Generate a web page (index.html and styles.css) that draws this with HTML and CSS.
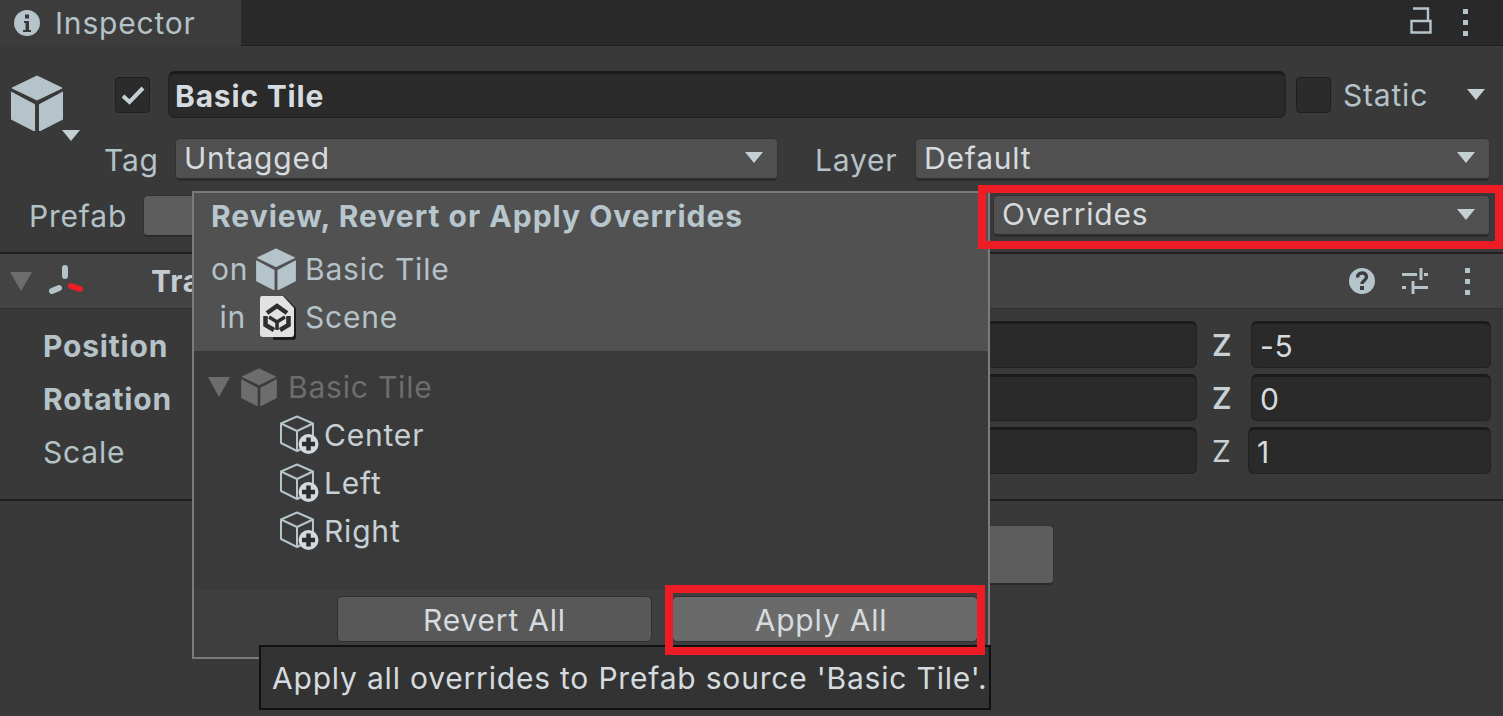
FILE: index.html
```html
<!DOCTYPE html>
<html lang="en">
<head>
    <meta charset="UTF-8">
    <title>Inspector</title>
    <link rel="stylesheet" href="styles.css">
</head>
<body>
    <svg class="defs" width="0" height="0">
        <symbol id="cube" viewBox="0 0 52 56">
            <path d="M26 1 L51 13 L26 25 L1 13Z M0 17 L23.5 29.5 V56 L0 44Z M28.5 29.5 L52 17 V44 L28.5 56Z" fill="currentColor" stroke="currentColor" stroke-width="1" stroke-linejoin="round"/>
        </symbol>
        <symbol id="cube-add" viewBox="0 0 40 40">
            <path d="M2 8.5 L18 1.5 L34 8.5 V28 L18 36 L2 28Z M2 8.5 L18 16 L34 8.5 M18 16 V36" fill="none" stroke="#b5c4cb" stroke-width="2" stroke-linejoin="round"/>
            <circle cx="29.5" cy="29" r="10" fill="#d3dade"/>
            <path d="M29.5 22.5 V35.5 M23 29 H36" stroke="#2c2c2c" stroke-width="4.5"/>
        </symbol>
    </svg>

    <div class="inspector">
        <div class="tabbar">
            <div class="tab">
                <svg class="tab-icon" width="28" height="28" viewBox="0 0 28 28">
                    <circle cx="14" cy="14" r="13" fill="#b5c4cb"/>
                    <path d="M11 12 H16 V21 H18 V23 H10 V21 H12.5 V14 H11Z" fill="#383838"/>
                    <rect x="12" y="5.5" width="4" height="4" fill="#383838"/>
                </svg>
                <span>Inspector</span>
            </div>
            <div class="tab-rest">
                <svg class="lock" width="22" height="27" viewBox="0 0 22 27">
                    <path d="M3 1.5 H18 V13.5 M1.5 14 H20.5 V25.5 H1.5Z" fill="none" stroke="#b5c4cb" stroke-width="2.4"/>
                </svg>
                <div class="kebab"><i></i><i></i><i></i></div>
            </div>
        </div>

        <div class="object-head">
            <div class="object-icon">
                <svg class="big-cube" width="52" height="56"><use href="#cube"/></svg>
                <span class="caret caret-small"></span>
            </div>
            <div class="name-row">
                <div class="check">
                    <svg width="24" height="20" viewBox="0 0 24 20"><path d="M2 11 L8.5 17 L22 3" fill="none" stroke="#c4ced3" stroke-width="4"/></svg>
                </div>
                <div class="name-field">Basic Tile</div>
                <div class="check check-static"></div>
                <span class="label static-label">Static</span>
                <span class="caret caret-static"></span>
            </div>
            <div class="tag-row">
                <span class="label tag-label">Tag</span>
                <div class="dropdown tag-drop">Untagged<span class="caret"></span></div>
                <span class="label layer-label">Layer</span>
                <div class="dropdown layer-drop">Default<span class="caret"></span></div>
            </div>
        </div>

        <div class="prefab-row">
            <span class="label prefab-label">Prefab</span>
            <div class="plain-btn prefab-btn"></div>
            <div class="dropdown override-drop">Overrides<span class="caret"></span></div>
        </div>

        <div class="comp-header">
            <span class="caret caret-fold"></span>
            <svg class="gizmo" width="38" height="36" viewBox="0 0 38 36">
                <path d="M18 5 V13 M5 28 L12 25" stroke="#b5c4cb" stroke-width="6" stroke-linecap="round"/>
                <path d="M24 23 L33 26" stroke="#ee1c25" stroke-width="6" stroke-linecap="round"/>
            </svg>
            <b class="comp-title">Tra</b>
            <div class="comp-tools">
                <svg width="28" height="28" viewBox="0 0 28 28">
                    <circle cx="14" cy="14" r="13" fill="#b5c4cb"/>
                    <path d="M9.5 10.5 C9.5 4.5 18.5 4.5 18.5 10 C18.5 13.5 14 13.5 14 17" fill="none" stroke="#3c3c3c" stroke-width="3.4"/>
                    <rect x="12" y="19" width="4" height="4" fill="#3c3c3c"/>
                </svg>
                <svg class="sliders" width="28" height="28" viewBox="0 0 28 28">
                    <path d="M1 7.5 H16 M23 7.5 H27 M20 1 V13 M1 20.5 H5 M12 20.5 H27 M12 14 V27" fill="none" stroke="#b5c4cb" stroke-width="3"/>
                </svg>
                <div class="kebab"><i></i><i></i><i></i></div>
            </div>
        </div>

        <div class="vectors">
            <div class="vec-row">
                <b class="vec-label">Position</b>
                <div class="field"></div>
                <span class="axis axis-changed">Z</span>
                <div class="field field-z">-5</div>
            </div>
            <div class="vec-row">
                <b class="vec-label">Rotation</b>
                <div class="field"></div>
                <span class="axis axis-changed">Z</span>
                <div class="field field-z">0</div>
            </div>
            <div class="vec-row">
                <span class="vec-label">Scale</span>
                <div class="field"></div>
                <span class="axis axis-scale">Z</span>
                <div class="field field-z">1</div>
            </div>
        </div>

        <div class="add-area">
            <div class="plain-btn add-btn"></div>
        </div>
    </div>

    <div class="popup">
        <div class="popup-head">
            <div class="popup-title">Review, Revert or Apply Overrides</div>
            <div class="popup-line">
                <span class="line-key">on</span>
                <svg class="line-icon" width="40" height="42"><use href="#cube"/></svg>
                <span>Basic Tile</span>
            </div>
            <div class="popup-line">
                <span class="line-key">in</span>
                <svg class="line-icon scene-icon" width="40" height="48" viewBox="0 0 40 48">
                    <path d="M4 3 H25 L37 15 V44 Q37 47 34 47 H14 V44 H4Z" fill="#1c1c1c"/>
                    <path d="M3 3 Q1 3 1 6 V41 Q1 44 4 44 H32 Q35 44 35 41 V15 L24 3Z" fill="#e2e2e2"/>
                    <path d="M8 20 L18 13 L28 20 M6.5 23 V32 L15 37 M29.5 23 V32 L21 37" fill="none" stroke="#2e2e2e" stroke-width="4.5"/>
                    <path d="M10 24 L18 29 L26 24 M18 29 V37" fill="none" stroke="#2e2e2e" stroke-width="3.5"/>
                </svg>
                <span>Scene</span>
            </div>
        </div>
        <div class="tree">
            <div class="tree-row tree-root">
                <span class="caret caret-tree"></span>
                <svg class="root-cube" width="36" height="38"><use href="#cube"/></svg>
                <span>Basic Tile</span>
            </div>
            <div class="tree-row tree-child">
                <svg width="40" height="40"><use href="#cube-add"/></svg>
                <span>Center</span>
            </div>
            <div class="tree-row tree-child">
                <svg width="40" height="40"><use href="#cube-add"/></svg>
                <span>Left</span>
            </div>
            <div class="tree-row tree-child">
                <svg width="40" height="40"><use href="#cube-add"/></svg>
                <span>Right</span>
            </div>
        </div>
        <div class="popup-foot">
            <div class="foot-btn">Revert All</div>
            <div class="foot-btn foot-btn-hover">Apply All</div>
        </div>
    </div>

    <div class="tooltip">Apply all overrides to Prefab source 'Basic Tile'.</div>

    <div class="highlight highlight-override"></div>
    <div class="highlight highlight-apply"></div>
</body>
</html>
```

FILE: styles.css
```css
* {
    box-sizing: border-box;
}
html, body {
    margin: 0;
    height: 716px;
    overflow: hidden;
}
body {
    position: relative;
    background-color: #393939;
    font-family: Inter, "Liberation Sans", sans-serif;
    font-size: 30px;
    letter-spacing: 0.8px;
    color: #b5c2c8;
}
.defs {
    position: absolute;
}
b {
    font-weight: 700;
}

/* tab bar */
.tabbar {
    display: flex;
    height: 46px;
}
.tab {
    display: flex;
    align-items: center;
    width: 241px;
    padding-left: 13px;
    background-color: #3c3c3c;
}
.tab-icon {
    margin-right: 14px;
}
.tab-rest {
    flex: 1;
    display: flex;
    align-items: center;
    justify-content: flex-end;
    gap: 29px;
    padding-right: 35px;
    background-color: #292929;
    border-bottom: 1px solid #1f1f1f;
}
.lock {
    margin-bottom: 4px;
    margin-right: 2px;
}
.kebab {
    display: flex;
    flex-direction: column;
    gap: 6px;
}
.kebab i {
    display: block;
    width: 5px;
    height: 5px;
    background-color: #b5c4cb;
}

/* shared bits */
.caret {
    display: inline-block;
    width: 0;
    height: 0;
    border-left: 9px solid transparent;
    border-right: 9px solid transparent;
    border-top: 11px solid #c5d0d5;
}
.label {
    white-space: nowrap;
}
.dropdown {
    display: flex;
    align-items: center;
    justify-content: space-between;
    padding: 0 14px 2px 8px;
    background-color: #505050;
    border: 1px solid #323232;
    border-bottom: 3px solid #2c2c2c;
    border-radius: 5px;
    color: #d5dbde;
}
.plain-btn {
    background-color: #5d5d5d;
    border: 1px solid #333;
    border-bottom: 2px solid #2a2a2a;
    border-radius: 5px;
}

/* object header */
.object-head {
    display: grid;
    grid-template-columns: 105px 1fr;
    padding-top: 25px;
}
.object-icon {
    grid-row: 1 / 3;
    position: relative;
    padding: 4px 0 0 11px;
}
.big-cube {
    color: #b5c4cb;
}
.caret-small {
    position: absolute;
    left: 62px;
    top: 59px;
}
.name-row {
    display: flex;
    align-items: center;
    height: 47px;
    padding-left: 10px;
}
.check {
    display: flex;
    align-items: center;
    justify-content: center;
    flex: none;
    width: 35px;
    height: 36px;
    background-color: #2b2b2b;
    border: 1px solid #1f1f1f;
    border-radius: 4px;
}
.name-field {
    width: 1118px;
    height: 47px;
    margin-left: 18px;
    padding: 0 0 0 6px;
    line-height: 45px;
    font-weight: 700;
    color: #d5dbde;
    background-color: #2a2a2a;
    border: 1px solid #222;
    border-top: 3px solid #1b1b1b;
    border-radius: 7px;
}
.check-static {
    margin-left: 10px;
}
.static-label {
    margin-left: 12px;
}
.caret-static {
    margin-left: 39px;
}
.tag-row {
    display: flex;
    align-items: center;
    height: 43px;
    margin-top: 20px;
}
.tag-label {
    width: 70px;
    margin-left: -1px;
    margin-right: 1px;
}
.tag-drop {
    width: 603px;
    height: 43px;
}
.layer-label {
    margin-left: 37px;
    width: 100px;
}
.layer-drop {
    width: 575px;
    height: 43px;
}
.prefab-row {
    display: flex;
    align-items: center;
    height: 42px;
    margin-top: 14px;
    padding-left: 29px;
}
.prefab-label {
    width: 114px;
}
.prefab-btn {
    width: 500px;
    height: 42px;
}
.override-drop {
    width: 497px;
    height: 42px;
    margin-left: 350px;
}

/* transform component */
.comp-header {
    display: flex;
    align-items: center;
    height: 57px;
    margin-top: 15px;
    padding-left: 10px;
    background-color: #434343;
    border-top: 2px solid #1f1f1f;
    border-bottom: 1px solid #303030;
}
.caret-fold {
    border-left-width: 11px;
    border-right-width: 11px;
    border-top: 19px solid #6c6c6c;
}
.gizmo {
    margin-left: 15px;
}
.comp-title {
    margin-left: 66px;
    color: #c2ccd1;
}
.comp-tools {
    display: flex;
    align-items: center;
    gap: 25px;
    margin-left: auto;
    padding-right: 33px;
}
.sliders {
    margin-right: 11px;
}
.vectors {
    display: flex;
    flex-direction: column;
    gap: 6px;
    height: 192px;
    padding: 12px 12px 0 43px;
    border-bottom: 2px solid #1f1f1f;
}
.vec-row {
    display: flex;
    align-items: center;
    height: 47px;
}
.vec-label {
    width: 257px;
    padding-top: 2px;
}
.field {
    flex: 1;
    height: 47px;
    padding-left: 8px;
    line-height: 45px;
    color: #d5dbde;
    background-color: #2a2a2a;
    border: 1px solid #222;
    border-top: 3px solid #1b1b1b;
    border-radius: 6px;
}
.axis {
    width: 54px;
    padding-left: 15px;
    color: #c7d1d6;
}
.axis-changed {
    font-weight: 600;
}
.axis-scale {
    width: 51px;
}
.field-z {
    flex: none;
    width: 240px;
}
.vec-row:last-child .field-z {
    width: 243px;
}
.add-area {
    display: flex;
    justify-content: center;
    padding-top: 24px;
}
.add-btn {
    width: 604px;
    height: 60px;
}

/* overrides popup */
.popup {
    position: absolute;
    left: 192px;
    top: 191px;
    display: flex;
    flex-direction: column;
    width: 798px;
    height: 468px;
    background-color: #3a3a3a;
    border: 2px solid #7b7b7b;
}
.popup-head {
    height: 158px;
    padding: 0 0 0 17px;
    background-color: #515151;
}
.popup-title {
    height: 52px;
    line-height: 46px;
    font-weight: 700;
    letter-spacing: 1px;
    color: #b8c6cd;
}
.popup-line {
    display: flex;
    align-items: center;
    height: 48px;
}
.line-key {
    width: 35px;
    text-align: right;
}
.line-icon {
    color: #b5c4cb;
    margin: 0 9px 0 10px;
    flex: none;
}
.scene-icon {
    margin: 0 6px 0 13px;
}
.tree {
    padding-top: 12px;
}
.tree-row {
    display: flex;
    align-items: center;
    height: 48px;
}
.tree-root {
    padding-left: 14px;
    color: #6d6d6d;
}
.caret-tree {
    border-left-width: 11px;
    border-right-width: 11px;
    border-top: 20px solid #6d6d6d;
}
.root-cube {
    margin: 0 11px 0 11px;
}
.tree-child {
    padding-left: 85px;
    gap: 5px;
    color: #c6d0d5;
}
.popup-foot {
    display: flex;
    justify-content: flex-end;
    gap: 20px;
    height: 67px;
    margin-top: auto;
    padding: 6px 10px 0 0;
    background-color: #3e3e3e;
}
.foot-btn {
    width: 315px;
    height: 46px;
    line-height: 46px;
    text-align: center;
    color: #d5dbde;
    background-color: #585858;
    border: 1px solid #303030;
    border-radius: 5px;
}
.foot-btn-hover {
    width: 306px;
    padding-right: 8px;
    background-color: #6a6a6a;
}

/* tooltip */
.tooltip {
    position: absolute;
    left: 259px;
    top: 645px;
    width: 732px;
    height: 65px;
    padding-left: 11px;
    line-height: 62px;
    white-space: nowrap;
    color: #d5dbde;
    background-color: #333;
    border: 2px solid #111;
}

/* red callouts */
.highlight {
    position: absolute;
    border: 8px solid #ee1c25;
}
.highlight-override {
    left: 978px;
    top: 185px;
    width: 525px;
    height: 64px;
}
.highlight-apply {
    left: 665px;
    top: 585px;
    width: 320px;
    height: 70px;
}
```
